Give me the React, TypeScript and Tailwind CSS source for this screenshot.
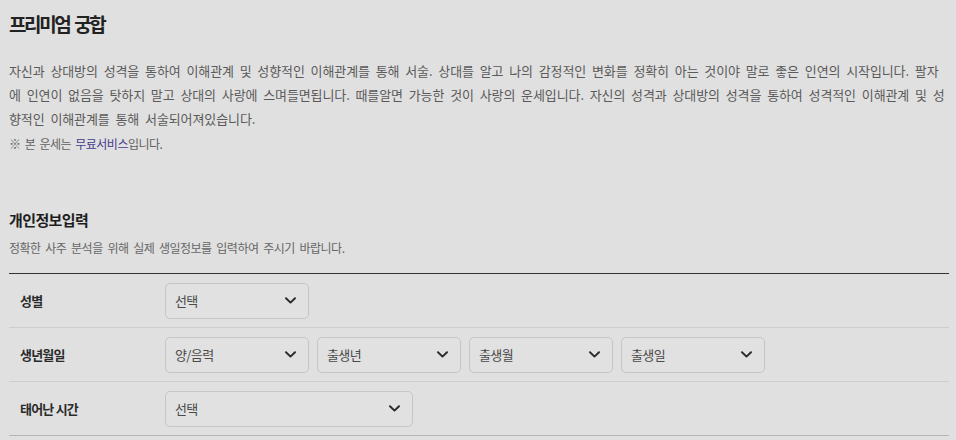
import React from "react";

const font = { fontFamily: '"Noto Sans CJK KR", "Noto Sans", sans-serif' };

function Chevron() {
  return (
    <svg width="11" height="7" viewBox="0 0 11 7" fill="none" className="shrink-0">
      <path d="M1 1.2 L5.5 5.6 L10 1.2" stroke="#2a2a2a" strokeWidth="1.9" strokeLinecap="round" strokeLinejoin="round" />
    </svg>
  );
}

function Select({ label, w }: { label: string; w: string }) {
  return (
    <div
      className={`${w} h-[36px] rounded-[5px] border border-[#c6c6c6] bg-[#e1e1e1] flex items-center justify-between pl-[9px] pr-[12px] text-[13px] tracking-[-0.6px] text-[#4a4a4a]`}
    >
      <span>{label}</span>
      <Chevron />
    </div>
  );
}

function Row({ label, children, last }: { label: string; children: React.ReactNode; last?: boolean }) {
  return (
    <div className={`flex h-[54px] items-center border-b ${last ? "border-[#b4b4b4]" : "border-[#cdcdcd]"}`}>
      <div className="w-[156px] pl-[11px] text-[13px] font-bold tracking-[-0.8px] text-[#2b2b2b]">{label}</div>
      <div className="flex gap-[8px]">{children}</div>
    </div>
  );
}

export default function App() {
  return (
    <div style={font} className="w-[956px] h-[440px] overflow-hidden bg-[#e0e0e0]">
      <div className="pl-[9px] pr-[7px] pt-[9px]">
        <h1 className="text-[19px] leading-[30px] font-semibold tracking-[-2.4px] [word-spacing:3px] text-[#222]">프리미엄 궁합</h1>
        <p className="mt-[20px] text-[13px] leading-[24px] tracking-[-0.1px] [word-spacing:3px] text-[#5a5a5a] whitespace-nowrap">
          자신과 상대방의 성격을 통하여 이해관계 및 성향적인 이해관계를 통해 서술. 상대를 알고 나의 감정적인 변화를 정확히 아는 것이야 말로 좋은 인연의 시작입니다. 팔자
          <br />
          에 인연이 없음을 탓하지 말고 상대의 사랑에 스며들면됩니다. 때를알면 가능한 것이 사랑의 운세입니다. 자신의 성격과 상대방의 성격을 통하여 성격적인 이해관계 및 성
          <br />
          향적인 이해관계를 통해 서술되어져있습니다.
        </p>
        <p className="mt-[1px] text-[12px] leading-[24px] tracking-[-0.5px] [word-spacing:2px] text-[#606060]">
          ※ 본 운세는 <span className="text-[#463c8c]">무료서비스</span>입니다.
        </p>
        <h2 className="mt-[52px] text-[15px] leading-[24px] font-bold tracking-[-0.6px] text-[#1e1e1e]">개인정보입력</h2>
        <p className="mt-[6px] text-[12px] leading-[20px] tracking-[-0.5px] [word-spacing:2.5px] text-[#666]">
          정확한 사주 분석을 위해 실제 생일정보를 입력하여 주시기 바랍니다.
        </p>
        <div className="mt-[15px] w-[940px] border-t border-[#333]">
          <Row label="성별">
            <Select label="선택" w="w-[144px]" />
          </Row>
          <Row label="생년월일">
            <Select label="양/음력" w="w-[144px]" />
            <Select label="출생년" w="w-[144px]" />
            <Select label="출생월" w="w-[144px]" />
            <Select label="출생일" w="w-[144px]" />
          </Row>
          <Row label="태어난 시간" last>
            <Select label="선택" w="w-[248px]" />
          </Row>
        </div>
      </div>
    </div>
  );
}
